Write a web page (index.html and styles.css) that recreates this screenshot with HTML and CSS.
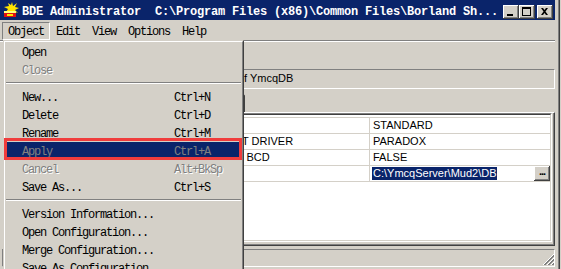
FILE: index.html
```html
<!DOCTYPE html>
<html>
<head>
<meta charset="utf-8">
<link rel="stylesheet" href="styles.css">
</head>
<body>
<div class="screen">
  <div class="window">
    <div class="titlebar">
      <svg class="app-icon" width="16" height="16" viewBox="0 0 16 16">
        <polygon points="9,0 10,4 14,1 12,5 16,6 12,8 15,11 10,9 9,12 7,9 3,10 5,7 1,5 6,4 5,1 8,3" fill="#ffe400"/>
        <rect x="1" y="9" width="12" height="6" fill="#e01010"/>
        <rect x="1" y="9" width="12" height="2" fill="#ffff80"/>
        <rect x="4" y="12" width="6" height="2" fill="#ffe400"/>
      </svg>
      <span class="title">BDE Administrator  C:\Program Files (x86)\Common Files\Borland Sh...</span>
      <div class="caption-btns">
        <span class="cbtn"><svg width="16" height="14" viewBox="0 0 16 14"><rect x="4" y="9" width="6" height="2" fill="#000"/></svg></span>
        <span class="cbtn"><svg width="16" height="14" viewBox="0 0 16 14"><path d="M3 2h9v9h-9z M4 4v6h7v-6z" fill="#000" fill-rule="evenodd"/></svg></span>
        <span class="cbtn close"><svg width="16" height="14" viewBox="0 0 16 14"><path d="M4 3h2l1.5 2 1.5-2h2l-2.5 3.5 2.5 3.5h-2l-1.5-2-1.5 2h-2l2.5-3.5z" fill="#000"/></svg></span>
      </div>
    </div>
    <div class="menubar">
      <span class="mbi pressed">Object</span>
      <span class="mbi">Edit</span>
      <span class="mbi">View</span>
      <span class="mbi">Options</span>
      <span class="mbi">Help</span>
    </div>
    <div class="etched"></div>
    <div class="toolbar"></div>
    <div class="main">
      <div class="tree"></div>
      <div class="right">
        <div class="caption-field">Definition of YmcqDB</div>
        <div class="tabs"><div class="tab">Definition</div></div>
        <div class="page">
          <div class="grid-frame">
            <div class="grid">
              <div class="rows">
                <div class="row"><div class="ck">TYPE</div><div class="cv">STANDARD</div></div>
                <div class="row"><div class="ck">DEFAULT DRIVER</div><div class="cv">PARADOX</div></div>
                <div class="row"><div class="ck">ENABLE BCD</div><div class="cv">FALSE</div></div>
                <div class="row"><div class="ck">PATH</div><div class="cv edit"><span class="sel">C:\YmcqServer\Mud2\DB</span><span class="dots-btn">...</span></div></div>
              </div>
            </div>
          </div>
        </div>
      </div>
    </div>
    <div class="statusbar">
      <div class="status-panel">
        <svg class="grip" width="12" height="12" viewBox="0 0 12 12" shape-rendering="crispEdges">
          <path d="M11.5 0.5 L0.5 11.5 M11.5 4.5 L4.5 11.5 M11.5 8.5 L8.5 11.5" stroke="#fff" fill="none"/>
          <path d="M11.5 1.5 L1.5 11.5 M11.5 2.5 L2.5 11.5 M11.5 5.5 L5.5 11.5 M11.5 6.5 L6.5 11.5 M11.5 9.5 L9.5 11.5 M11.5 10.5 L10.5 11.5" stroke="#808080" fill="none"/>
        </svg>
      </div>
    </div>
  </div>
  <div class="frame-edge"></div>

  <div class="dropdown">
    <div class="dd-inner">
      <div class="dd-item"><span>Open</span><span></span></div>
      <div class="dd-item disabled"><span>Close</span><span></span></div>
      <div class="dd-sep"></div>
      <div class="dd-item"><span>New...</span><span>Ctrl+N</span></div>
      <div class="dd-item"><span>Delete</span><span>Ctrl+D</span></div>
      <div class="dd-item"><span>Rename</span><span>Ctrl+M</span></div>
      <div class="dd-item hl"><span>Apply</span><span>Ctrl+A</span></div>
      <div class="dd-item disabled"><span>Cancel</span><span>Alt+BkSp</span></div>
      <div class="dd-item"><span>Save As...</span><span>Ctrl+S</span></div>
      <div class="dd-sep"></div>
      <div class="dd-item"><span>Version Information...</span><span></span></div>
      <div class="dd-item"><span>Open Configuration...</span><span></span></div>
      <div class="dd-item"><span>Merge Configuration...</span><span></span></div>
      <div class="dd-item"><span>Save As Configuration...</span><span></span></div>
    </div>
    <div class="annot"></div>
  </div>
</div>
</body>
</html>
```

FILE: styles.css
```css
body {
  margin: 0;
  background: #d4d0c8;
  overflow: hidden;
}

.screen {
  position: relative;
  display: flex;
  width: 561px;
  height: 269px;
  overflow: hidden;
  font-family: "Liberation Sans", Arial, sans-serif;
  font-size: 11px;
  color: #000;
}

.window {
  width: 555px;
  flex: none;
  display: flex;
  flex-direction: column;
  background: #d4d0c8;
}

.frame-edge {
  width: 6px;
  flex: none;
  background: linear-gradient(to right, #d4d0c8 0 3px, #808080 3px 4px, #404040 4px 5px, #d4d0c8 5px 6px);
}

/* title bar */
.titlebar {
  height: 20px;
  flex: none;
  background: #0a246a;
  color: #fff;
  display: flex;
  align-items: flex-start;
}

.app-icon {
  flex: none;
  margin: 2px 3px 0 3px;
}

.title {
  font-family: "Liberation Mono", monospace;
  font-weight: bold;
  font-size: 12px;
  letter-spacing: -0.2px;
  line-height: 14px;
  margin-top: 5px;
  white-space: pre;
}

.caption-btns {
  display: flex;
  margin-left: auto;
  margin-top: 5px;
  margin-right: 2px;
}

.cbtn {
  display: block;
  width: 16px;
  height: 14px;
  background: #d4d0c8;
  box-shadow: inset -1px -1px #404040, inset 1px 1px #fff, inset -2px -2px #808080;
}

.cbtn svg {
  display: block;
}

.cbtn.close {
  margin-left: 2px;
}

/* menu bar */
.menubar {
  height: 20px;
  flex: none;
  box-sizing: border-box;
  padding: 2px 0 0 2px;
  display: flex;
  font-family: "Liberation Mono", monospace;
  font-size: 12px;
  letter-spacing: -1.2px;
}

.mbi {
  height: 18px;
  box-sizing: border-box;
  line-height: 19px;
  padding: 0 5px;
  border: 1px solid transparent;
  white-space: pre;
}

.mbi.pressed {
  border-color: #808080 #fff #fff #808080;
}

.etched {
  height: 2px;
  flex: none;
  box-sizing: border-box;
  border-top: 1px solid #808080;
  border-bottom: 1px solid #fff;
}

.toolbar {
  height: 25px;
  flex: none;
}

/* main panes */
.main {
  height: 179px;
  flex: none;
  display: flex;
}

.tree {
  width: 180px;
  margin: 2px 0 0 3px;
  box-sizing: border-box;
  background: #fff;
  border: 1px solid;
  border-color: #808080 #fff #fff #808080;
}

.right {
  width: 369px;
  margin-left: 3px;
  padding-top: 2px;
  display: flex;
  flex-direction: column;
}

.caption-field {
  height: 20px;
  flex: none;
  box-sizing: border-box;
  border: 1px solid;
  border-color: #808080 #fff #fff #808080;
  padding-left: 2px;
  line-height: 17px;
  white-space: nowrap;
  overflow: hidden;
}

.tabs {
  height: 23px;
  flex: none;
  display: flex;
  align-items: flex-end;
  padding-left: 4px;
}

.tab {
  width: 55px;
  height: 18px;
  box-sizing: border-box;
  border-top: 1px solid #fff;
  border-left: 1px solid #fff;
  border-right: 1px solid #404040;
  border-radius: 2px 2px 0 0;
  box-shadow: inset -1px 0 #808080;
  text-align: center;
  line-height: 16px;
}

.page {
  height: 134px;
  flex: none;
  box-sizing: border-box;
  border-top: 1px solid #fff;
  border-left: 1px solid #fff;
  border-right: 1px solid #404040;
  border-bottom: 1px solid #404040;
  box-shadow: inset -1px -1px #808080;
  padding: 0 2px 3px 8px;
}

.grid-frame {
  height: 129px;
  box-sizing: border-box;
  border: 1px solid;
  border-color: #808080 #fff #fff #808080;
}

.grid {
  height: 100%;
  box-sizing: border-box;
  background: #fff;
  border: 1px solid;
  border-color: #404040 #d4d0c8 #d4d0c8 #404040;
  padding-top: 2px;
}

.rows {
  border-top: 1px solid #d4d0c8;
}

.row {
  display: flex;
  height: 16px;
  box-sizing: border-box;
  border-bottom: 1px solid #d4d0c8;
}

.ck {
  width: 173px;
  flex: none;
  box-sizing: border-box;
  border-right: 1px solid #d4d0c8;
  padding-left: 3px;
  line-height: 15px;
  white-space: nowrap;
  overflow: hidden;
}

.cv {
  flex: 1;
  display: flex;
  padding-left: 3px;
  line-height: 15px;
  white-space: nowrap;
}

.cv.edit {
  padding-left: 2px;
}

.sel {
  background: #0a246a;
  color: #fff;
  padding: 0 1px;
  height: 13px;
  line-height: 13px;
  margin-top: 1px;
}

.dots-btn {
  margin-left: auto;
  width: 16px;
  height: 15px;
  background: #d4d0c8;
  box-shadow: inset -1px -1px #404040, inset 1px 1px #fff, inset -2px -2px #808080;
  font-weight: bold;
  text-align: center;
  line-height: 10px;
  letter-spacing: -1px;
}

/* status bar */
.statusbar {
  height: 23px;
  flex: none;
  box-sizing: border-box;
  padding: 3px 0 2px 2px;
}

.status-panel {
  height: 18px;
  box-sizing: border-box;
  border: 1px solid;
  border-color: #808080 #fff #fff #808080;
  display: flex;
  justify-content: flex-end;
  align-items: flex-end;
}

.grip {
  display: block;
}

/* dropdown menu (overlay) */
.dropdown {
  position: absolute;
  left: 3px;
  top: 40px;
  width: 241px;
  height: 240px;
  box-sizing: border-box;
  background: #d4d0c8;
  border: 1px solid;
  border-color: #d4d0c8 #404040 #404040 #d4d0c8;
  font-family: "Liberation Mono", monospace;
  font-size: 12px;
  letter-spacing: -1.2px;
}

.dd-inner {
  height: 100%;
  box-sizing: border-box;
  border: 1px solid;
  border-color: #fff #808080 #808080 #fff;
  padding: 1px;
}

.dd-item {
  display: grid;
  grid-template-columns: 152px auto;
  height: 18px;
  line-height: 20px;
  padding-left: 16px;
  white-space: pre;
}

.dd-item.disabled {
  color: #808080;
  text-shadow: 1px 1px 0 #fff;
}

.dd-item.hl {
  background: #0a246a;
  color: #808080;
}

.dd-sep {
  height: 2px;
  margin: 3px 0 4px;
  box-sizing: border-box;
  border-top: 1px solid #808080;
  border-bottom: 1px solid #fff;
}

.annot {
  position: absolute;
  left: 0;
  top: 97px;
  width: 238px;
  height: 22px;
  box-sizing: border-box;
  border: 3px solid #f03c3c;
}
```
